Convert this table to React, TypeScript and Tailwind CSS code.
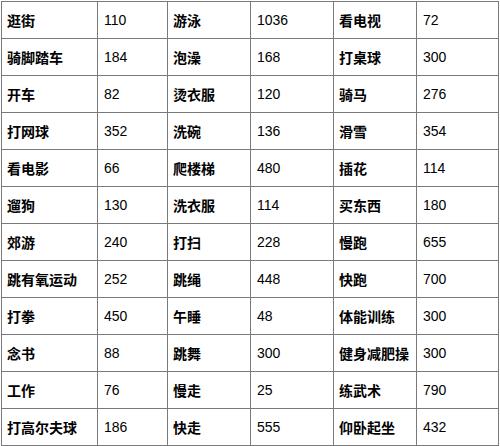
import React from 'react';

type Row = [string, string, string, string, string, string];

const rows: Row[] = [
  ['逛街', '110', '游泳', '1036', '看电视', '72'],
  ['骑脚踏车', '184', '泡澡', '168', '打桌球', '300'],
  ['开车', '82', '烫衣服', '120', '骑马', '276'],
  ['打网球', '352', '洗碗', '136', '滑雪', '354'],
  ['看电影', '66', '爬楼梯', '480', '插花', '114'],
  ['遛狗', '130', '洗衣服', '114', '买东西', '180'],
  ['郊游', '240', '打扫', '228', '慢跑', '655'],
  ['跳有氧运动', '252', '跳绳', '448', '快跑', '700'],
  ['打拳', '450', '午睡', '48', '体能训练', '300'],
  ['念书', '88', '跳舞', '300', '健身减肥操', '300'],
  ['工作', '76', '慢走', '25', '练武术', '790'],
  ['打高尔夫球', '186', '快走', '555', '仰卧起坐', '432'],
];

const App = () => {
  return (
    <div className="w-[500px] h-[446px] bg-white overflow-hidden">
      <div className="ml-px mt-px w-[498px] grid grid-cols-[95px_69px_82px_82px_82px_81px] auto-rows-[36px] gap-px p-px bg-[#7a7a7a]">
        {rows.map((row, i) =>
          row.map((cell, j) => (
            <div
              key={`${i}-${j}`}
              className={
                j % 2 === 0
                  ? "bg-white flex items-center pl-[5px] text-[14px] font-semibold text-black whitespace-nowrap font-['Noto_Sans_CJK_SC',sans-serif]"
                  : "bg-white flex items-center pl-[6px] text-[14px] text-black font-['Liberation_Sans',Arial,sans-serif]"
              }
            >
              {cell}
            </div>
          ))
        )}
      </div>
    </div>
  );
};

export default App;
